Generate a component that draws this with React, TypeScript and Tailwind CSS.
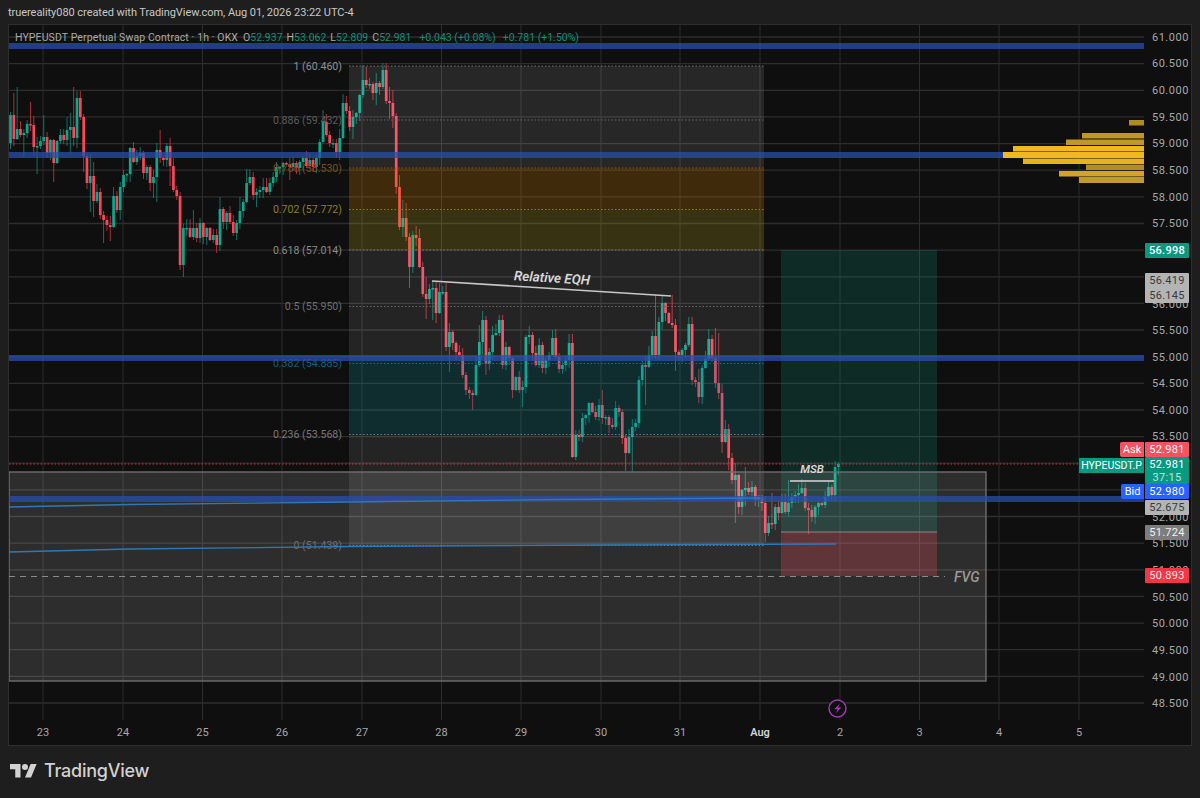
const closes = [
  115, 139, 129, 135, 133, 124, 125, 147, 146, 141, 137, 153, 140, 163, 141, 135, 140, 130, 127, 138, 98, 117, 156, 183, 176, 201,
  192, 215, 220, 225, 227, 196, 210, 187, 175, 174, 148, 162, 156, 153, 173, 167, 183, 177, 150, 158, 160, 146, 166, 190, 196, 265, 228,
  228, 237, 228, 238, 223, 237, 228, 240, 235, 245, 209, 222, 213, 222, 233, 223, 211, 202, 183, 177, 195, 192, 190, 187, 192, 183, 177,
  167, 167, 163, 164, 167, 163, 168, 162, 158, 166, 160, 167, 158, 142, 122, 135, 143, 143, 152, 138, 103, 111, 127, 117,
  113, 95, 80, 85, 84, 93, 83, 87, 70, 101, 103, 116, 187, 227, 218, 237, 267, 235, 238, 267, 294, 299, 289, 288, 313, 292, 292,
  347, 332, 343, 352, 355, 375, 390, 393, 395, 365, 342, 320, 364, 352, 335, 333, 320, 365, 347, 358, 390, 377, 390, 387, 337, 335, 353,
  365, 345, 368, 360, 355, 338, 357, 369, 365, 360, 343, 457, 435, 437, 418, 415, 403, 412, 417, 405, 418, 417, 425, 427, 408, 412, 438,
  453, 437, 427, 423, 380, 365, 367, 355, 336, 355, 322, 303, 313, 323, 325, 352, 355, 350, 345, 324, 380, 382, 397, 368, 359, 339, 358,
  383, 393, 442, 429, 458, 480,
  475, 507, 490, 488, 492, 487, 500, 497, 503, 533, 523, 524, 507, 513, 502, 512, 503, 497, 495, 493, 488, 508, 510, 517, 507, 503, 505,
  497, 487, 495, 467, 464,
];

// wick ends read off the chart, as [x, y]
const tips = [
  [14, 93], [17, 87], [17, 137], [24, 157], [31, 102], [37, 174], [44, 115], [54, 182], [67, 117], [70, 113], [70, 153], [74, 87], [77, 92],
  [77, 148], [80, 96], [84, 172], [90, 154], [90, 212], [93, 162], [93, 217], [104, 243], [110, 241], [120, 220], [133, 142], [153, 198],
  [157, 145], [157, 202], [160, 130], [170, 186], [180, 270], [183, 277], [193, 210], [217, 253], [220, 197], [237, 240], [240, 197],
  [247, 169], [250, 169], [253, 172], [253, 200], [257, 207], [290, 180], [323, 110], [347, 96], [352, 110], [352, 139], [362, 65],
  [362, 98], [366, 67], [372, 100], [376, 73], [376, 105], [389, 87], [389, 119], [392, 90], [392, 128], [399, 175], [399, 230], [402, 200],
  [402, 237], [406, 203], [406, 238], [409, 288], [412, 232], [412, 272], [426, 277], [426, 319], [433, 281], [433, 320], [436, 282],
  [436, 323], [439, 283], [445, 283], [449, 323], [449, 372], [472, 410], [479, 325], [482, 311], [482, 355], [486, 375], [500, 326],
  [503, 320], [512, 375], [522, 407], [529, 326], [533, 332], [552, 330], [555, 329], [572, 457], [602, 390], [627, 471], [632, 472],
  [645, 405], [654, 295], [662, 295], [672, 295], [675, 371], [692, 321], [692, 385], [700, 369], [710, 329], [714, 328], [718, 333],
  [722, 408], [722, 453], [729, 427], [729, 470], [737, 463], [737, 523], [745, 467], [745, 506], [754, 500], [765, 542], [772, 493],
  [780, 500], [790, 480], [801, 482], [808, 534], [814, 505], [834, 461],
];

const candles = closes.map((close, i) => {
  const open = i === 0 ? 143 : closes[i - 1];
  const seed = (i * 37 + 11) % 23;
  let high = Math.min(open, close) - (seed % 9) - 1;
  let low = Math.max(open, close) + ((seed * 7) % 8) + 1;
  return { x: 10.5 + i * 3.325, open, close, get high() { return high; }, get low() { return low; }, widen(y: number) { high = Math.min(high, y); low = Math.max(low, y); } };
});

tips.forEach(([x, y]) => {
  const c = candles[Math.max(0, Math.min(candles.length - 1, Math.round((x - 10.5) / 3.325)))];
  c.widen(y);
});

const hLines = [37, 63.6, 90.3, 116.9, 143.6, 170.2, 196.8, 223.5, 250.1, 276.8, 303.4, 330, 356.7, 383.3, 410, 436.6, 463.2, 489.9, 516.5, 543.2, 569.8, 596.4, 623.1, 649.7, 676.4, 703];
const vLines = [43, 123, 202.5, 282, 362, 441.5, 521, 601, 680, 760, 840, 919.5, 999, 1079];
const blueLines = [46, 155, 358, 499];

const fibLevels = [
  { y: 66, label: "1 (60.460)", line: "#777777", text: "fill-[#8f8f8f]" },
  { y: 120, label: "0.886 (59.432)", line: "#666666", text: "fill-[#5c5c5c]" },
  { y: 168, label: "0.786 (58.530)", line: "#8a5a14", text: "fill-[#7c4e12]" },
  { y: 209.5, label: "0.702 (57.772)", line: "#8c8020", text: "fill-[#8c7f20]" },
  { y: 250, label: "0.618 (57.014)", line: "#777777", text: "fill-[#8a8a8a]" },
  { y: 306.5, label: "0.5 (55.950)", line: "#666666", text: "fill-[#6e6e6e]" },
  { y: 363.5, label: "0.382 (54.885)", line: "#157080", text: "fill-[#0f6475]" },
  { y: 434.5, label: "0.236 (53.568)", line: "#777777", text: "fill-[#767676]" },
  { y: 545.5, label: "0 (51.439)", line: "#666666", text: "fill-[#5a5a5a]" },
];

const profile = [
  { y: 120, h: 5.5, x: 1129, fill: "#b08a22" },
  { y: 133, h: 5.5, x: 1082, fill: "#bf9726" },
  { y: 139.5, h: 5.5, x: 1066, fill: "#bf9726" },
  { y: 146, h: 5.5, x: 1013, fill: "#f0b820" },
  { y: 152, h: 6, x: 1003, fill: "#f0b820" },
  { y: 158.5, h: 5.5, x: 1023, fill: "#e6b220" },
  { y: 164.5, h: 5.5, x: 1086, fill: "#b38c25" },
  { y: 171, h: 5.5, x: 1059, fill: "#d4a228" },
  { y: 177, h: 6, x: 1079, fill: "#c29a2a" },
];

const ticks = [
  { y: 37, t: "61.000" }, { y: 63, t: "60.500" }, { y: 90, t: "60.000" }, { y: 117, t: "59.500" }, { y: 143, t: "59.000" },
  { y: 170, t: "58.500" }, { y: 197, t: "58.000" }, { y: 223, t: "57.500" }, { y: 304, t: "56.000" }, { y: 330, t: "55.500" },
  { y: 357, t: "55.000" }, { y: 383, t: "54.500" }, { y: 410, t: "54.000" }, { y: 436, t: "53.500" }, { y: 517, t: "52.000" },
  { y: 543, t: "51.500" }, { y: 570, t: "51.000" }, { y: 597, t: "50.500" }, { y: 623, t: "50.000" }, { y: 650, t: "49.500" },
  { y: 677, t: "49.000" }, { y: 703, t: "48.500" },
];

const days = [
  { x: 43, t: "23" }, { x: 123, t: "24" }, { x: 202.5, t: "25" }, { x: 282, t: "26" }, { x: 362, t: "27" }, { x: 441.5, t: "28" },
  { x: 521, t: "29" }, { x: 601, t: "30" }, { x: 680, t: "31" }, { x: 760, t: "Aug" }, { x: 840, t: "2" }, { x: 919.5, t: "3" },
  { x: 999, t: "4" }, { x: 1079, t: "5" },
];

const ohlc = [
  ["O", "52.937"],
  ["H", "53.062"],
  ["L", "52.809"],
  ["C", "52.981"],
];

function PriceTag({ y, h, className, children }: { y: number; h: number; className: string; children: React.ReactNode }) {
  return (
    <div
      className={`absolute left-[1px] w-[44px] rounded-[1px] flex flex-col items-center justify-center leading-[13px] tracking-[0.3px] ${className}`}
      style={{ top: y - 25, height: h }}
    >
      {children}
    </div>
  );
}

export default function App() {
  return (
    <div className="w-[1200px] h-[798px] flex flex-col bg-[#1e1e1e] overflow-hidden font-[Roboto,sans-serif] text-[11px] text-[#b4b4b4]">
      <div className="h-[24px] pl-[8px] pt-[6px] leading-[14px] text-[#c8c8c8] tracking-[-0.05px]">
        truereality080 created with TradingView.com, Aug 01, 2026 23:22 UTC-4
      </div>

      <div className="mx-[8px] border border-[#2e2e2e] bg-[#0f0f0f] flex flex-col">
        <div className="h-[695px] flex">
          <div className="relative w-[1135px] overflow-hidden">
            <svg className="block" width="1135" height="695" viewBox="9 25 1135 695">
              {hLines.map((y) => (
                <line key={y} x1="9" x2="1144" y1={y} y2={y} stroke="#2e2e2e" strokeWidth="1.3" />
              ))}
              {vLines.map((x) => (
                <line key={x} x1={x} x2={x} y1="25" y2="720" stroke="#2d2d2d" strokeWidth="1" />
              ))}

              {candles.map((c, i) => {
                const up = c.close <= c.open;
                const color = up ? "#089981" : "#f23645";
                return (
                  <g key={i}>
                    <line x1={c.x} x2={c.x} y1={c.high} y2={c.low} stroke={color} strokeWidth="1" opacity="0.72" />
                    <rect
                      x={c.x - 1.35}
                      y={Math.min(c.open, c.close)}
                      width="2.7"
                      height={Math.max(1.5, Math.abs(c.open - c.close))}
                      fill={up ? "#0aa88e" : "#f7475a"}
                    />
                  </g>
                );
              })}

              {/* fib retracement */}
              <rect x="349" y="66" width="415" height="102" fill="#ffffff" opacity="0.1" />
              <rect x="349" y="168" width="415" height="41.5" fill="#ff9800" opacity="0.2" />
              <rect x="349" y="209.5" width="415" height="40.5" fill="#c8b820" opacity="0.22" />
              <rect x="349" y="250" width="415" height="110" fill="#ffffff" opacity="0.09" />
              <rect x="349" y="360" width="415" height="75" fill="#10a0b0" opacity="0.2" />
              <rect x="349" y="435" width="415" height="110" fill="#ffffff" opacity="0.09" />
              {fibLevels.map((f) => (
                <line key={f.y} x1="349" x2="764" y1={f.y} y2={f.y} stroke={f.line} strokeWidth="1" strokeDasharray="1.5 2" />
              ))}
              {fibLevels.map((f) => (
                <text key={f.label} x="342" y={f.y + 3.8} textAnchor="end" className={`text-[10.6px] ${f.text}`}>
                  {f.label}
                </text>
              ))}

              {/* long position */}
              <rect x="781" y="250" width="156" height="282" fill="#089981" opacity="0.2" />
              <rect x="781" y="532" width="156" height="44" fill="#f23645" opacity="0.26" />
              <line x1="781" x2="937" y1="532" y2="532" stroke="#777777" strokeWidth="1.2" />

              {/* FVG box */}
              <rect x="9" y="472" width="977" height="209" fill="#ffffff" opacity="0.125" />
              <rect x="9" y="472" width="977" height="209" fill="none" stroke="#6e6e6e" strokeWidth="1.4" />
              <line x1="9" x2="945" y1="576.5" y2="576.5" stroke="#8a8a8a" strokeWidth="1" strokeDasharray="6 5" />
              <text x="954" y="582" className="text-[14px] italic fill-[#9a9a9a] font-medium">FVG</text>

              <line x1="9" x2="1144" y1="464" y2="464" stroke="#f23645" strokeWidth="1" strokeDasharray="1.5 2" opacity="0.85" />

              {blueLines.map((y) => (
                <rect key={y} x="9" y={y - 3} width="1135" height="6" fill="#2a4db0" opacity="0.75" />
              ))}

              {/* anchored vwaps */}
              <polyline points="9,507 130,504.5 350,502 560,499.5 760,498" fill="none" stroke="#2f78b8" strokeWidth="1.3" />
              <polyline points="9,552 130,549 350,546.5 600,545 836,544" fill="none" stroke="#2f78b8" strokeWidth="1.3" />

              {/* hand drawn lines */}
              <line x1="432" x2="671" y1="281" y2="296" stroke="#c8c8c8" strokeWidth="1.6" />
              <text x="552" y="282.5" textAnchor="middle" transform="rotate(3.4 552 278)" className="text-[13.5px] italic font-semibold fill-[#d8d8d8]">
                Relative EQH
              </text>
              <line x1="790" x2="834" y1="481" y2="481" stroke="#d8d8d8" strokeWidth="1.6" />
              <text x="812" y="473" textAnchor="middle" className="text-[11.5px] italic font-semibold fill-[#d8d8d8]">
                MSB
              </text>

              {/* visible range profile */}
              {profile.map((p) => (
                <rect key={p.y} x={p.x} y={p.y} width={1144 - p.x} height={p.h} fill={p.fill} />
              ))}

              <circle cx="837.5" cy="708.5" r="8.5" fill="#0f0f0f" stroke="#a23ab5" strokeWidth="1.4" />
              <path d="M840 703.5 L834.2 709.2 H837.6 L835.8 713.2 L841.4 707.6 H838 Z" fill="#a23ab5" />
            </svg>

            {/* legend */}
            <div className="absolute left-[6px] top-[6px] flex items-center gap-[5px] leading-[13px] text-[10.5px] text-[#a9a9a9]">
              <span className="tracking-[0.11px]">HYPEUSDT Perpetual Swap Contract · 1h · OKX</span>
              {ohlc.map(([k, v]) => (
                <span key={k} className="mr-[-1px]">
                  {k}
                  <span className="text-[#0c8f7a]">{v}</span>
                </span>
              ))}
              <span className="ml-[4px] text-[#0c8f7a]">+0.043 (+0.08%)</span>
              <span className="ml-[2px] text-[#0c8f7a]">+0.781 (+1.50%)</span>
            </div>

            {/* labels hanging off the axis */}
            <div className="absolute top-[417px] right-0 w-[24px] h-[15px] rounded-l-[2px] bg-[#f7525f] text-white text-center leading-[15px]">Ask</div>
            <div className="absolute top-[433px] right-0 w-[65px] h-[15px] bg-[#089981] text-white text-[10.5px] text-center leading-[15px]">HYPEUSDT.P</div>
            <div className="absolute top-[459px] right-0 w-[23px] h-[15px] rounded-l-[2px] bg-[#2962ff] text-white text-center leading-[15px]">Bid</div>
          </div>

          <div className="relative flex-1 text-[#a8a8a8] tracking-[0.5px]">
            {ticks.map((t) => (
              <div key={t.t} className="absolute left-[8px] -translate-y-1/2 leading-[13px]" style={{ top: t.y - 25 }}>
                {t.t}
              </div>
            ))}
            <PriceTag y={243} h={15} className="bg-[#089981] text-white font-medium">56.998</PriceTag>
            <PriceTag y={273} h={30} className="bg-[#b4b4b4] text-[#3a3a3a] gap-[2px]">
              <span>56.419</span>
              <span>56.145</span>
            </PriceTag>
            <PriceTag y={442} h={15} className="bg-[#f7525f] text-white">52.981</PriceTag>
            <PriceTag y={457} h={27} className="bg-[#089981] text-white">
              <span>52.981</span>
              <span className="text-[#bfe6df]">37:15</span>
            </PriceTag>
            <PriceTag y={484} h={15} className="bg-[#2962ff] text-white">52.980</PriceTag>
            <PriceTag y={500} h={15} className="bg-[#b4b4b4] text-[#3a3a3a]">52.675</PriceTag>
            <PriceTag y={525} h={15} className="bg-[#7d7d7d] text-[#f0f0f0]">51.724</PriceTag>
            <PriceTag y={568} h={15} className="bg-[#f23645] text-[#f5e6e6]">50.893</PriceTag>
          </div>
        </div>

        <div className="relative h-[25px]">
          {days.map((d) => (
            <span
              key={d.t}
              className={`absolute top-[6px] -translate-x-1/2 leading-[13px] ${d.t === "Aug" ? "text-[#d4d4d4] font-semibold" : "text-[#a8a8a8]"}`}
              style={{ left: d.x - 9 }}
            >
              {d.t}
            </span>
          ))}
        </div>
      </div>

      <div className="flex-1 flex items-center gap-[7px] pl-[10px] pb-[2px]">
        <svg width="27" height="21" viewBox="0 0 36 28" fill="#d2d2d2">
          <path d="M14 22H7V11H0V4h14v18ZM28 22h-8l7.5-18h8L28 22Z" />
          <circle cx="20" cy="8" r="4" />
        </svg>
        <span className="font-[Inter,sans-serif] font-medium text-[18px] leading-[24px] text-[#d2d2d2] tracking-[-0.25px]">TradingView</span>
      </div>
    </div>
  );
}
